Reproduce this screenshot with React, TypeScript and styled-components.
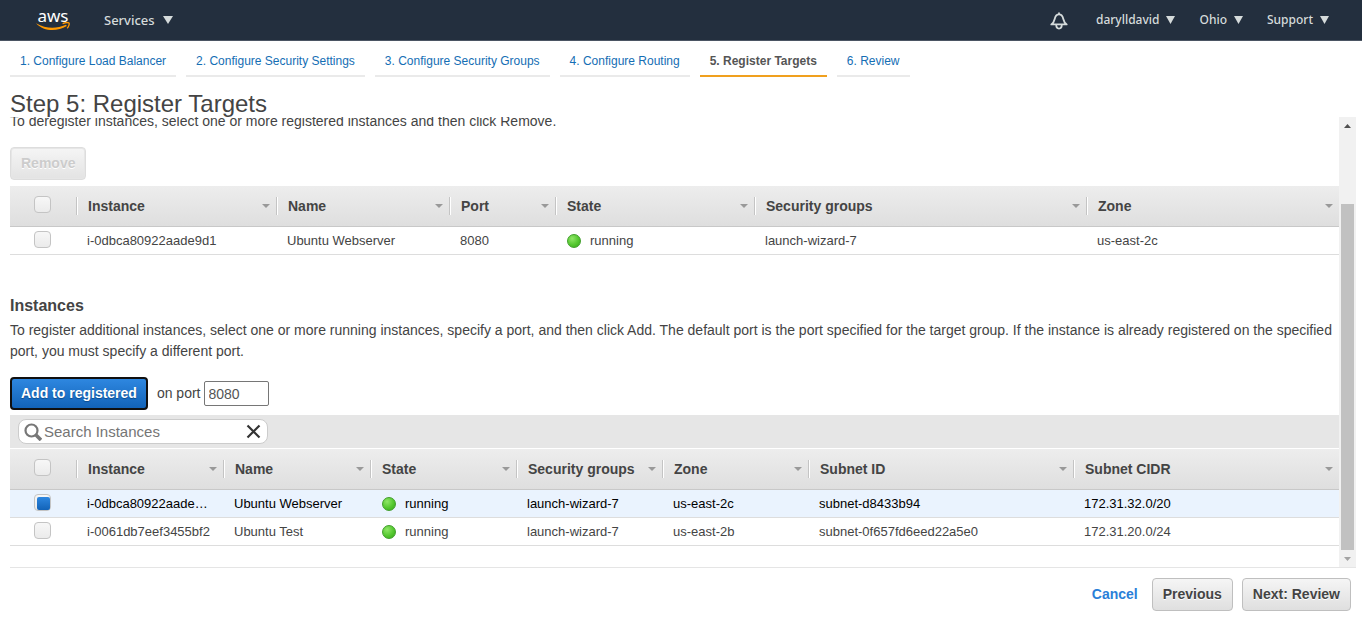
import React, { useState } from "react";
import styled, { createGlobalStyle, css } from "styled-components";

const GlobalStyle = createGlobalStyle`
  * { box-sizing: border-box; }
  body {
    margin: 0;
    background: #fff;
    color: #444;
    font-family: "Liberation Sans", Arial, sans-serif;
    font-size: 14px;
    line-height: 21px;
  }
  button, input { font-family: inherit; }
`;

const Page = styled.div`
  display: flex;
  flex-direction: column;
  height: 100vh;
  overflow: hidden;
`;

/* Top navigation */

const NavBar = styled.header`
  display: flex;
  align-items: center;
  flex: none;
  height: 41px;
  padding: 0 33px 0 36px;
  background: #232f3e;
  border-bottom: 1px solid #4b5563;
  font-family: "Noto Sans", "Open Sans", sans-serif;
`;

const Logo = styled.a`
  display: flex;
  flex-direction: column;
  align-items: center;
  width: 34px;
  margin-right: 34px;
  color: #fff;
  text-decoration: none;
  font-size: 17px;
  font-weight: 400;
  line-height: 13px;
  svg { display: block; }
`;

const NavButton = styled.button<{ $large?: boolean }>`
  display: flex;
  align-items: center;
  gap: ${(p) => (p.$large ? 8 : 7)}px;
  padding: 0;
  border: 0;
  background: none;
  color: #d5dbdb;
  font-size: ${(p) => (p.$large ? 13 : 12)}px;
  font-weight: 500;
  line-height: 20px;
`;

const NavRight = styled.div`
  display: flex;
  align-items: center;
  gap: 24px;
  margin-left: auto;
`;

const BellButton = styled.button`
  display: flex;
  margin-right: 4px;
  padding: 2px 0 0;
  border: 0;
  background: none;
`;

const Caret = ({ size = 9 }: { size?: number }) => (
  <svg width={size} height="8" viewBox="0 0 10 8" preserveAspectRatio="none" aria-hidden="true">
    <path d="M0 0h10L5 8z" fill="#d5dbdb" />
  </svg>
);

/* Wizard steps */

const Steps = styled.nav`
  display: flex;
  flex: none;
  gap: 10px;
  padding: 4px 10px 0;
`;

const Step = styled.a<{ $active?: boolean }>`
  height: 32px;
  padding: 0 10px;
  border-bottom: 2px solid ${(p) => (p.$active ? "#f0a01e" : "#eaeaea")};
  color: ${(p) => (p.$active ? "#555" : "#146eb4")};
  font-size: 12px;
  font-weight: ${(p) => (p.$active ? "bold" : "normal")};
  line-height: 32px;
  text-decoration: none;
  white-space: nowrap;
`;

const Title = styled.h1`
  flex: none;
  height: 40px;
  margin: 0;
  padding: 14px 10px 0;
  font-size: 24px;
  font-weight: normal;
  line-height: 26px;
`;

/* Scrolling pane */

const Pane = styled.main`
  display: flex;
  flex: 1;
  min-height: 0;
  margin-right: 6px;
`;

const Content = styled.div`
  flex: 1;
  min-width: 0;
  padding-left: 10px;
  overflow: hidden;
`;

const Intro = styled.p`
  margin: -6px 0 15px;
`;

const Paragraph = styled.p`
  margin: 4px 0 15px;
`;

const Heading = styled.h2`
  margin: 40px 0 0;
  font-size: 16px;
  line-height: 21px;
`;

const Track = styled.div`
  display: flex;
  flex-direction: column;
  align-items: center;
  flex: none;
  width: 17px;
  background: #f1f1f1;
`;

const TrackArrow = styled.div`
  display: flex;
  align-items: center;
  justify-content: center;
  height: 17px;
`;

const TrackGap = styled.div`
  flex: 70;
`;

const Thumb = styled.div`
  flex: 346;
  width: 13px;
  background: #c1c1c1;
`;

/* Controls */

const Button = styled.button<{ $primary?: boolean }>`
  height: 33px;
  padding: 0 10px;
  border: 1px solid #bfbfbf;
  border-radius: 4px;
  background: linear-gradient(#f5f5f5, #dfdfdf);
  color: #444;
  font-size: 14px;
  font-weight: bold;
  line-height: 21px;
  text-shadow: 0 1px 0 #fff;
  white-space: nowrap;

  &:disabled {
    border-color: #ddd;
    box-shadow: inset 0 0 0 1px #e6e6e6;
    background: linear-gradient(#f5f5f5, #e3e3e3);
    color: #ccc;
  }

  ${(p) =>
    p.$primary &&
    css`
      padding: 0 9px;
      border: 2px solid #101010;
      background: linear-gradient(#2e87e0, #1263b8);
      color: #fff;
      text-shadow: 0 1px 1px #0b4a8c;
    `}
`;

const ActionRow = styled.div<{ $gap: number }>`
  display: flex;
  align-items: center;
  margin-bottom: ${(p) => p.$gap}px;
`;

const PortLabel = styled.label`
  margin: 0 3px 0 9px;
`;

const PortInput = styled.input`
  width: 65px;
  height: 25px;
  padding: 0 4px;
  border: 1px solid #767676;
  border-radius: 2px;
  color: #555;
  font-size: 14px;
`;

const SearchBar = styled.div`
  display: flex;
  align-items: center;
  height: 34px;
  padding: 0 8px;
  background: #e6e6e6;
  border-bottom: 1px solid #fff;
`;

const SearchBox = styled.div`
  display: flex;
  align-items: center;
  width: 250px;
  height: 25px;
  padding: 0 6px 0 5px;
  border: 1px solid #ccc;
  border-radius: 8px;
  background: #fff;
  svg { flex: none; display: block; }
`;

const SearchInput = styled.input`
  flex: 1;
  min-width: 0;
  height: 21px;
  padding: 0 2px;
  border: 0;
  outline: 0;
  background: none;
  font-size: 15px;
  color: #444;
  &::placeholder { color: #757575; opacity: 1; }
`;

const ClearButton = styled.button`
  padding: 0;
  border: 0;
  background: none;
`;

const Checkbox = styled.input<{ $head?: boolean }>`
  appearance: none;
  display: block;
  width: 17px;
  height: 17px;
  margin: 0 0 ${(p) => (p.$head ? 4 : 2)}px 24px;
  padding: 2px 0 0 2px;
  border: 1px solid #c4c4c4;
  border-radius: 4px;
  background: linear-gradient(#f7f7f7, #ebebeb);

  &:checked::before {
    content: "";
    display: block;
    width: 13px;
    height: 13px;
    border-radius: 2px;
    background: linear-gradient(#2e87e0, #1263b8);
  }
`;

/* Tables */

const Table = styled.table`
  width: 100%;
  table-layout: fixed;
  border-collapse: separate;
  border-spacing: 0;
`;

const HeadRow = styled.tr`
  background: linear-gradient(#ededed, #dedede);
`;

const HeadCell = styled.th`
  height: 41px;
  padding: 0;
  border-bottom: 1px solid #c8c8c8;
  text-align: left;
  white-space: nowrap;
`;

const HeadInner = styled.div`
  display: flex;
  align-items: center;
  justify-content: space-between;
  height: 18px;
  padding: 0 6px 0 11px;
  border-left: 1px solid #c4c4c4;
  box-shadow: inset 1px 0 0 #fff;
  svg { flex: none; }
`;

const Row = styled.tr<{ $selected?: boolean }>`
  background: ${(p) => (p.$selected ? "#eaf3fe" : "#fff")};
  color: ${(p) => (p.$selected ? "#000" : "#444")};
`;

const Cell = styled.td<{ $check?: boolean }>`
  height: 28px;
  padding: ${(p) => (p.$check ? "0" : "0 11px")};
  border-bottom: 1px solid #ddd;
  font-size: 13px;
  line-height: 20px;
  overflow: hidden;
  text-overflow: ellipsis;
  white-space: nowrap;
`;

const State = styled.span`
  display: flex;
  align-items: center;
  gap: 9px;
  padding-left: 1px;
`;

const Dot = styled.i`
  width: 14px;
  height: 14px;
  border: 1px solid #3f9e2a;
  border-radius: 50%;
  background: radial-gradient(circle at 35% 30%, #8fe667, #54c72f 55%, #36a51a);
`;

/* Footer */

const Footer = styled.footer`
  display: flex;
  align-items: center;
  justify-content: flex-end;
  gap: 9px;
  flex: none;
  height: 52px;
  margin: 0 6px 0 10px;
  padding: 2px 5px 0 0;
  border-top: 1px solid #e5e5e5;
`;

const CancelLink = styled.a`
  margin-right: 5px;
  color: #2a7fd8;
  font-weight: bold;
  text-decoration: none;
`;

const SortArrow = () => (
  <svg width="8" height="4" viewBox="0 0 8 4" aria-hidden="true">
    <path d="M0 0h8L4 4z" fill="#999" />
  </svg>
);

type Column = { label: string; width?: number };
type Item = { id: string; cells: string[]; selected?: boolean };

const registeredColumns: Column[] = [
  { label: "Instance", width: 200 },
  { label: "Name", width: 173 },
  { label: "Port", width: 106 },
  { label: "State", width: 199 },
  { label: "Security groups", width: 332 },
  { label: "Zone" },
];

const instanceColumns: Column[] = [
  { label: "Instance", width: 147 },
  { label: "Name", width: 147 },
  { label: "State", width: 146 },
  { label: "Security groups", width: 146 },
  { label: "Zone", width: 146 },
  { label: "Subnet ID", width: 265 },
  { label: "Subnet CIDR" },
];

const registeredItems: Item[] = [
  {
    id: "r1",
    cells: ["i-0dbca80922aade9d1", "Ubuntu Webserver", "8080", "running", "launch-wizard-7", "us-east-2c"],
  },
];

const instanceItems: Item[] = [
  {
    id: "a1",
    selected: true,
    cells: ["i-0dbca80922aade9d1", "Ubuntu Webserver", "running", "launch-wizard-7", "us-east-2c", "subnet-d8433b94", "172.31.32.0/20"],
  },
  {
    id: "a2",
    cells: ["i-0061db7eef3455bf2", "Ubuntu Test", "running", "launch-wizard-7", "us-east-2b", "subnet-0f657fd6eed22a5e0", "172.31.20.0/24"],
  },
];

function InstanceTable({ columns, items }: { columns: Column[]; items: Item[] }) {
  const [selected, setSelected] = useState<string[]>(items.filter((i) => i.selected).map((i) => i.id));
  const toggle = (id: string) =>
    setSelected((s) => (s.includes(id) ? s.filter((x) => x !== id) : [...s, id]));
  const all = selected.length === items.length;

  return (
    <Table>
      <colgroup>
        <col width={66} />
        {columns.map((c) => (
          <col key={c.label} width={c.width} />
        ))}
      </colgroup>
      <thead>
        <HeadRow>
          <HeadCell>
            <Checkbox
              $head
              type="checkbox"
              aria-label="Select all"
              checked={all}
              onChange={() => setSelected(all ? [] : items.map((i) => i.id))}
            />
          </HeadCell>
          {columns.map((c) => (
            <HeadCell key={c.label} scope="col">
              <HeadInner>
                {c.label}
                <SortArrow />
              </HeadInner>
            </HeadCell>
          ))}
        </HeadRow>
      </thead>
      <tbody>
        {items.map((item) => (
          <Row key={item.id} $selected={selected.includes(item.id)}>
            <Cell $check>
              <Checkbox
                type="checkbox"
                aria-label={`Select ${item.cells[0]}`}
                checked={selected.includes(item.id)}
                onChange={() => toggle(item.id)}
              />
            </Cell>
            {item.cells.map((text, i) => (
              <Cell key={columns[i].label}>
                {columns[i].label === "State" ? (
                  <State>
                    <Dot />
                    {text}
                  </State>
                ) : (
                  text
                )}
              </Cell>
            ))}
          </Row>
        ))}
      </tbody>
    </Table>
  );
}

const steps = [
  "1. Configure Load Balancer",
  "2. Configure Security Settings",
  "3. Configure Security Groups",
  "4. Configure Routing",
  "5. Register Targets",
  "6. Review",
];

export default function App() {
  const [port, setPort] = useState("8080");
  const [query, setQuery] = useState("");

  return (
    <Page>
      <GlobalStyle />
      <NavBar>
        <Logo href="#">
          aws
          <svg width="34" height="9" viewBox="0 0 34 9" aria-hidden="true">
            <path d="M0 1.200C10 7 20 7.200 30 2.800l.8 1.200C21 9.800 8 9.800 0 1.200z" fill="#f90" />
            <path d="M26.600 1.600C29.500.5 32.200.4 33 1c.6.9-.2 3.700-1.800 5.300" fill="none" stroke="#f90" strokeWidth="1.300" />
          </svg>
        </Logo>
        <NavButton type="button" $large>
          Services
          <Caret size={10} />
        </NavButton>
        <NavRight>
          <BellButton type="button" aria-label="Notifications">
            <svg width="18" height="18" viewBox="0 0 18 18" fill="none" stroke="#d5dbdb" strokeWidth="1.800" aria-hidden="true">
              <path d="M9 .4v1.800M1.300 12.400C4 10.600 4.300 9 4.700 7 5.300 4 6.500 2.300 9 2.300S12.700 4 13.300 7c.4 2 .7 3.600 3.400 5.400z" strokeLinejoin="round" />
              <path d="M6.200 12.600c0 2.600 1 4 2.800 4s2.800-1.400 2.800-4" />
            </svg>
          </BellButton>
          <NavButton type="button">darylldavid<Caret /></NavButton>
          <NavButton type="button">Ohio<Caret /></NavButton>
          <NavButton type="button">Support<Caret /></NavButton>
        </NavRight>
      </NavBar>

      <Steps aria-label="Wizard steps">
        {steps.map((s, i) => (
          <Step key={s} href="#" $active={i === 4} aria-current={i === 4 ? "step" : undefined}>
            {s}
          </Step>
        ))}
      </Steps>
      <Title>Step 5: Register Targets</Title>

      <Pane>
        <Content>
          <Intro>To deregister instances, select one or more registered instances and then click Remove.</Intro>
          <ActionRow $gap={6}>
            <Button type="button" disabled>Remove</Button>
          </ActionRow>
          <InstanceTable columns={registeredColumns} items={registeredItems} />

          <Heading>Instances</Heading>
          <Paragraph>
            To register additional instances, select one or more running instances, specify a port, and then click Add.
            The default port is the port specified for the target group. If the instance is already registered on the
            specified port, you must specify a different port.
          </Paragraph>
          <ActionRow $gap={5}>
            <Button type="button" $primary>Add to registered</Button>
            <PortLabel htmlFor="port">on port</PortLabel>
            <PortInput id="port" value={port} onChange={(e) => setPort(e.target.value)} />
          </ActionRow>
          <SearchBar>
            <SearchBox>
              <svg width="18" height="18" viewBox="0 0 18 18" fill="none" stroke="#777" aria-hidden="true">
                <circle cx="7.500" cy="7.500" r="6" strokeWidth="2.200" />
                <path d="M12 12l5 5" strokeWidth="3.600" />
              </svg>
              <SearchInput
                aria-label="Search Instances"
                placeholder="Search Instances"
                value={query}
                onChange={(e) => setQuery(e.target.value)}
              />
              <ClearButton type="button" aria-label="Clear search" onClick={() => setQuery("")}>
                <svg width="15" height="15" viewBox="0 0 15 15" stroke="#333" strokeWidth="2.200" aria-hidden="true">
                  <path d="M1.500 1.500l12 12M13.500 1.500l-12 12" />
                </svg>
              </ClearButton>
            </SearchBox>
          </SearchBar>
          <InstanceTable columns={instanceColumns} items={instanceItems} />
        </Content>
        <Track aria-hidden="true">
          <TrackArrow>
            <svg width="7" height="4" viewBox="0 0 7 4"><path d="M0 4h7L3.500 0z" fill="#505050" /></svg>
          </TrackArrow>
          <TrackGap />
          <Thumb />
          <TrackArrow>
            <svg width="7" height="4" viewBox="0 0 7 4"><path d="M0 0h7L3.500 4z" fill="#a3a3a3" /></svg>
          </TrackArrow>
        </Track>
      </Pane>

      <Footer>
        <CancelLink href="#">Cancel</CancelLink>
        <Button type="button">Previous</Button>
        <Button type="button">Next: Review</Button>
      </Footer>
    </Page>
  );
}
